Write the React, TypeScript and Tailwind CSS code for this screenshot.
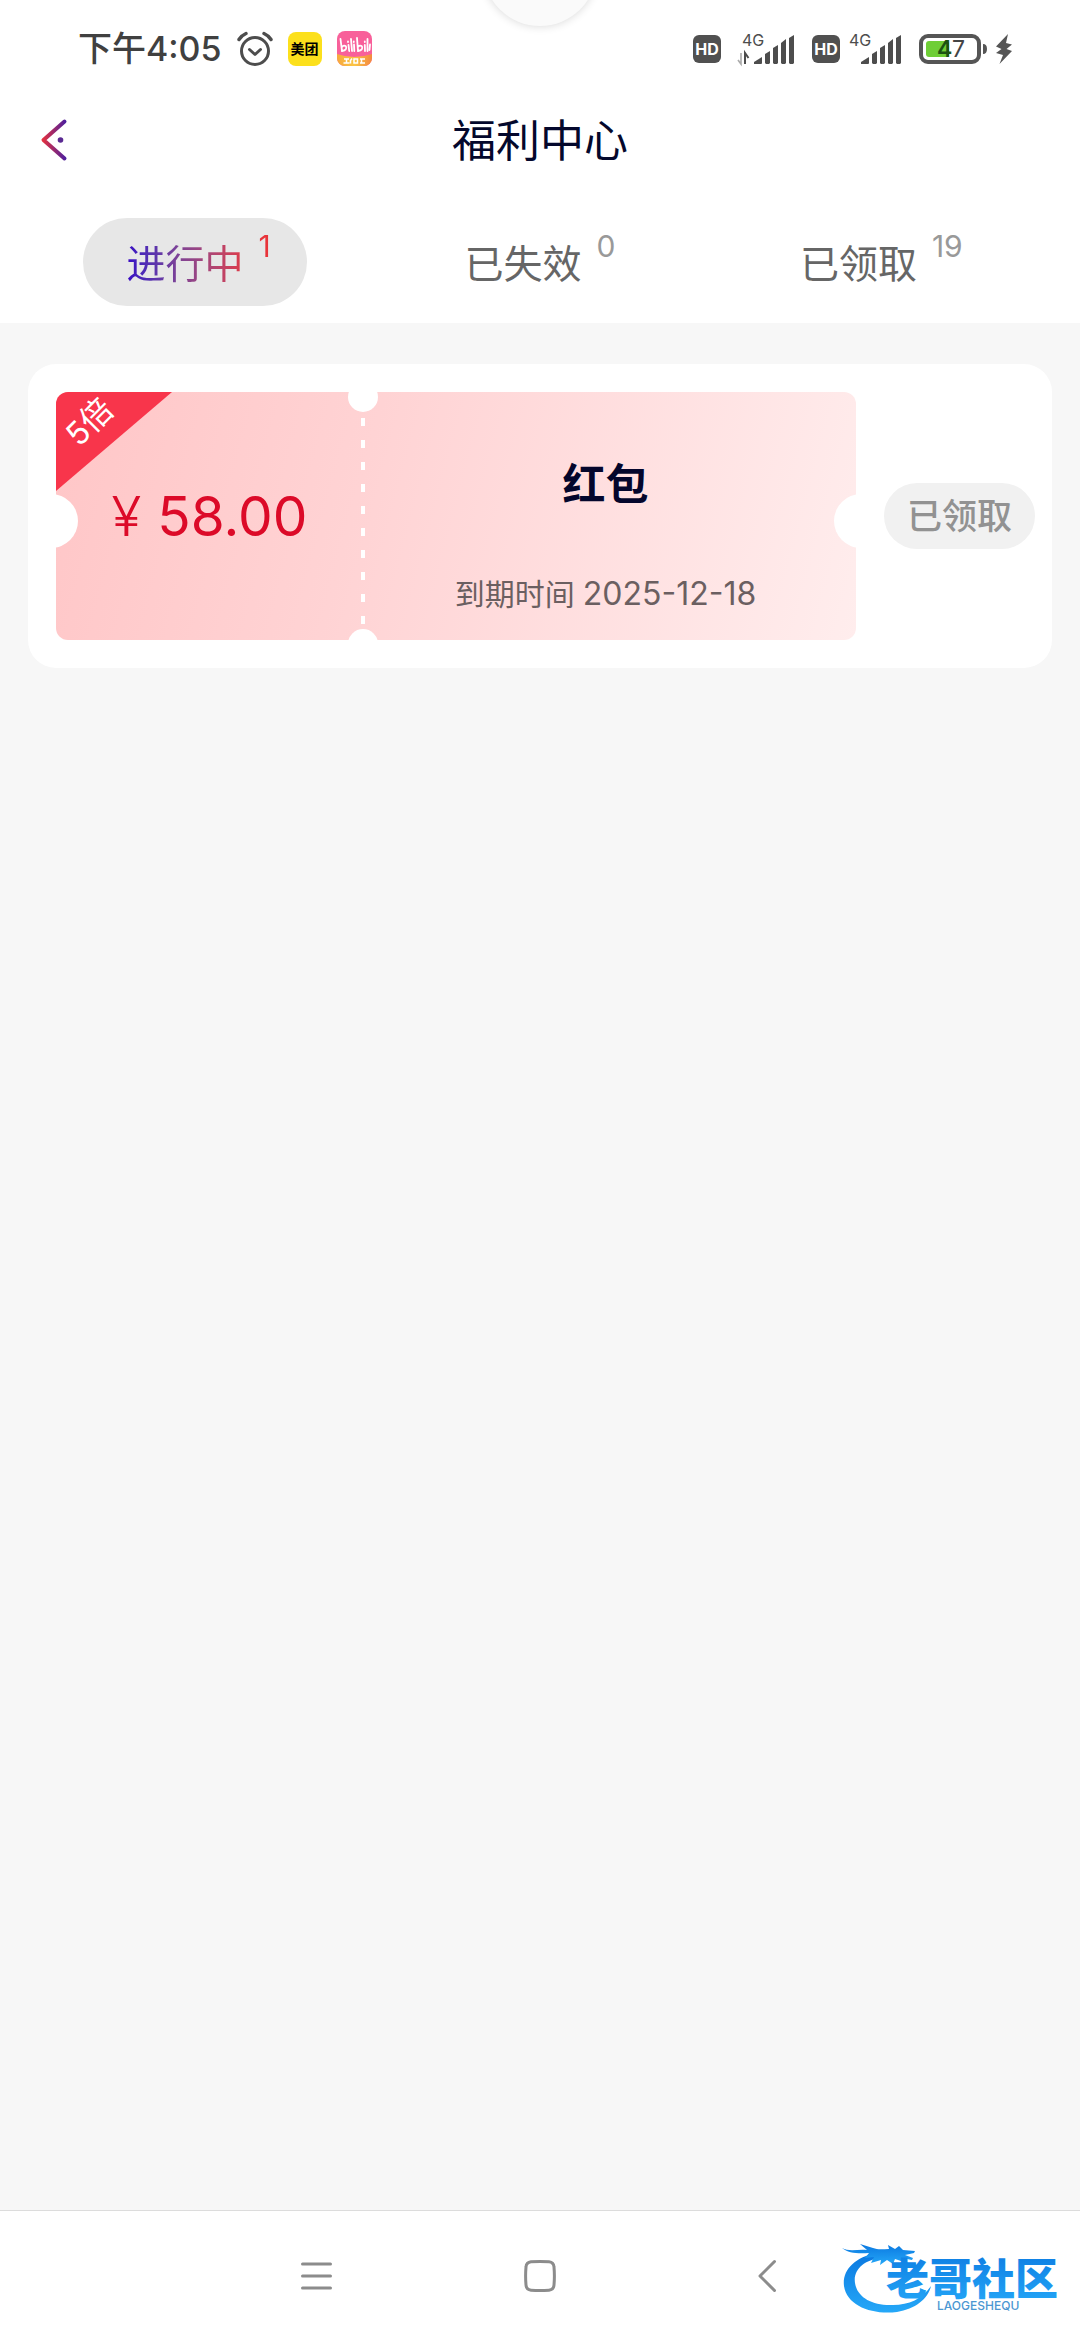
import React from "react";

type Tab = { label: string; count: number };

const tabs: Tab[] = [
  { label: "进行中", count: 1 },
  { label: "已失效", count: 0 },
  { label: "已领取", count: 19 },
];

function AlarmIcon() {
  return (
    <svg className="h-9 w-9" viewBox="0 0 36 36" fill="none" stroke="#4d4d4d" strokeWidth="3" strokeLinecap="round" strokeLinejoin="round">
      <circle cx="18" cy="20" r="13.5" />
      <path d="M12.5 18.5 L18 23.5 L23.5 18.5" />
      <path d="M2 8.5 Q4.5 4.5 9 2.5" strokeWidth="3.4" />
      <path d="M34 8.5 Q31.5 4.5 27 2.5" strokeWidth="3.4" />
    </svg>
  );
}

function BilibiliIcon() {
  return (
    <svg className="h-[35px] w-[35px]" viewBox="0 0 35 35">
      <defs>
        <clipPath id="bili-clip">
          <rect width="35" height="35" rx="8" />
        </clipPath>
        <linearGradient id="bili-band" x1="0" x2="1">
          <stop offset="0" stopColor="#f6a93c" />
          <stop offset="0.5" stopColor="#fbc544" />
          <stop offset="1" stopColor="#f4883f" />
        </linearGradient>
      </defs>
      <g clipPath="url(#bili-clip)">
        <rect width="35" height="35" fill="#f8609a" />
        <path d="M0 23 Q17 29 35 23 V35 H0Z" fill="url(#bili-band)" />
        <g fill="none" stroke="#fff" strokeWidth="1.8" strokeLinecap="round">
          <path d="M3.5 8 L5 20 Q10.5 19 9 15.5 Q7 13.5 5 16" />
          <path d="M11.5 14 L12.2 20 M11 10.5 v.5 M14 8 L15 20 M17 13.5 L17.3 20 M16.8 10.5 v.5" />
          <path d="M20 7 L21 20 Q26.5 19 25 15.5 Q23 13.5 21 16" />
          <path d="M27.8 14 L28 20 M27.8 10.5 v.5 M30.5 8 L30.5 20 M33 13.5 L32.5 19" />
        </g>
        <path d="M7 28 h5 M9.5 28 v4 M6.5 32 h6 M15 27.5 l-1.5 2 v3 M17 28 h3.5 v4 h-3.5z M23 28 h5 M23 32 h5 M24.5 28 v4" stroke="#fff" strokeWidth="1.5" fill="none" />
      </g>
    </svg>
  );
}

function HdBadge() {
  return (
    <span className="flex h-7 w-7 items-center justify-center rounded-md bg-[#505050] text-base font-bold text-white">
      HD
    </span>
  );
}

function Signal({ arrows }: { arrows?: boolean }) {
  return (
    <svg className="h-10 w-[59px]" viewBox="0 -4 59 40">
      <text x="5" y="13" fontSize="16" fill="#4d4d4d" className="font-['Inter']">4G</text>
      {arrows && (
        <g fill="none" strokeWidth="1.6">
          <path d="M4 20 V31 L1 27" stroke="#aaa" />
          <path d="M8 31 V20 L11.5 25" stroke="#4d4d4d" strokeWidth="2" />
        </g>
      )}
      <g fill="#4d4d4d">
        <path d="M17 31 v-2 l8 -5 v6 q0 1 -1 1z" />
        <path d="M28 21 l5 -3 v12 l-1 1 h-3 l-1 -1z" />
        <path d="M36 15 l5 -3 v18 l-1 1 h-3 l-1 -1z" />
        <path d="M44 10 l5 -4 v24 l-1 1 h-3 l-1 -1z" />
        <path d="M52 5 l5 -3 v28 l-1 1 h-3 l-1 -1z" />
      </g>
    </svg>
  );
}

function Battery() {
  return (
    <svg className="h-[30px] w-[94px]" viewBox="0 0 94 30">
      <rect x="2" y="2" width="58" height="26" rx="7" fill="#fff" stroke="#555" strokeWidth="4" />
      <rect x="7" y="7" width="23" height="16" rx="3" fill="#6fce36" />
      <text x="18" y="23" fontSize="23" fontWeight="600" fill="#1c5312" className="font-['Inter']">4</text>
      <text x="33" y="23" fontSize="23" fill="#444" className="font-['Inter']">7</text>
      <path d="M64 10 q4 0 4 5 q0 5 -4 5z" fill="#555" />
      <path d="M89 0 L77 12.5 L82.500 15 L77 19 L84 21 L80.5 30 L93 17 L87.5 15 L93 10.5 L87 9Z" fill="#555" />
    </svg>
  );
}

function StatusBar() {
  return (
    <div className="flex h-[97px] items-center justify-between pr-[67px] pl-[78px]">
      <div className="flex items-center gap-[15px]">
        <span className="text-[34px] leading-10 font-medium text-[#404040]">下午4:05</span>
        <AlarmIcon />
        <span className="flex h-[34px] w-[34px] items-center justify-center rounded-lg bg-[#fce01c] text-sm font-bold text-black">
          美团
        </span>
        <BilibiliIcon />
      </div>
      <div className="flex items-center gap-4">
        <HdBadge />
        <Signal arrows />
        <div className="flex items-center gap-1">
          <HdBadge />
          <Signal />
        </div>
        <Battery />
      </div>
    </div>
  );
}

function TitleBar() {
  return (
    <div className="grid h-[88px] grid-cols-[1fr_auto_1fr] items-center px-9">
      <button type="button" aria-label="返回" className="h-12 w-12">
        <svg className="h-12 w-9" viewBox="0 0 36 48" fill="none">
          <defs>
            <linearGradient id="back-gradient" gradientUnits="userSpaceOnUse" x1="6" y1="0" x2="30" y2="0">
              <stop offset="0" stopColor="#e8323c" />
              <stop offset="1" stopColor="#4a1fa0" />
            </linearGradient>
          </defs>
          <path d="M28.5 4.5 L7.5 23 L28.5 41.5" stroke="url(#back-gradient)" strokeWidth="4" strokeLinecap="round" strokeLinejoin="round" />
          <circle cx="24.5" cy="23" r="2.8" fill="#5a2a92" />
        </svg>
      </button>
      <h1 className="text-[44px] leading-none text-[#04082c]">福利中心</h1>
    </div>
  );
}

function Tabs() {
  return (
    <div role="tablist" className="grid grid-cols-3 justify-items-center pt-[33px] pr-8 pb-[17px] pl-6">
      {tabs.map((tab, i) => {
        const active = i === 0;
        return (
          <button
            key={tab.label}
            type="button"
            role="tab"
            aria-selected={active}
            className={
              active
                ? "h-[88px] rounded-full bg-[#e7e7e7] pr-9 pl-11"
                : "h-[88px] rounded-full pr-9 pl-11"
            }
          >
            <span
              className={
                active
                  ? "flex items-start gap-[15px] bg-linear-to-r from-[#3a05c4] to-[#e8343a] to-85% bg-clip-text text-transparent"
                  : "flex items-start gap-[15px] text-[#666]"
              }
            >
              <span className="pt-1 text-[39px] leading-[56px]">{tab.label}</span>
              <span className={active ? "text-3xl leading-7" : "text-3xl leading-7 text-[#999]"}>
                {tab.count}
              </span>
            </span>
          </button>
        );
      })}
    </div>
  );
}

function Coupon() {
  return (
    <article className="flex items-center gap-7 rounded-[28px] bg-white py-7 pr-[17px] pl-7">
      <div className="relative flex h-[248px] flex-1 overflow-hidden rounded-xl bg-[linear-gradient(105deg,#ffc6c7_0%,#ffd3d4_38%,#ffeded_100%)]">
        <div className="flex w-[307px] items-center justify-center text-[55px] text-[#dc0a28]">
          <span className="flex items-baseline gap-4">
            <span className="font-light">¥</span>
            <span>58.00</span>
          </span>
        </div>
        <div className="flex flex-1 flex-col items-center justify-between pt-16 pr-2 pb-6">
          <h2 className="text-[43px] leading-14 font-bold text-[#04062c]">红包</h2>
          <p className="flex items-baseline gap-2 text-[30px] leading-11 text-[#6b5f61]">
            <span>到期时间</span>
            <time dateTime="2025-12-18" className="text-[32px]">2025-12-18</time>
          </p>
        </div>

        <div className="absolute top-0 left-0 h-[99px] w-[116px] bg-[#f8354b] [clip-path:polygon(0_0,100%_0,0_100%)]" />
        <span className="absolute top-[10px] left-2 -rotate-45 text-[32px] leading-10 text-white">5倍</span>
        <div className="absolute top-[26px] left-[305px] h-[208px] w-[4px] bg-[repeating-linear-gradient(to_bottom,#fff_0_8px,transparent_8px_22px)]" />
        <div className="absolute -top-[10px] left-[292px] h-[30px] w-[30px] rounded-full bg-white" />
        <div className="absolute -bottom-[19px] left-[292px] h-[30px] w-[30px] rounded-full bg-white" />
        <div className="absolute top-[102px] -left-8 h-[54px] w-[54px] rounded-full bg-white" />
        <div className="absolute top-[102px] -right-8 h-[54px] w-[54px] rounded-full bg-white" />
      </div>
      <button type="button" disabled className="h-[66px] w-[151px] rounded-full bg-[#f1f1f1] text-[35px] leading-none font-medium text-[#929292]">
        已领取
      </button>
    </article>
  );
}

function CommunityLogo() {
  return (
    <svg className="h-20 w-[226px]" viewBox="0 0 226 80">
      <defs>
        <linearGradient id="logo-blue" x1="0" y1="0" x2="0" y2="1">
          <stop offset="0" stopColor="#0b78e0" />
          <stop offset="1" stopColor="#25a8f8" />
        </linearGradient>
      </defs>
      <g fill="url(#logo-blue)">
        <path d="M37 15 C14 19 2 33 4 48 C7 68 32 77 57 74 C75 71 88 61 91 48 C82 61 69 67 53 67 C32 68 17 59 15 45 C13 32 24 21 43 20Z" />
        <path d="M2 10 C9 14 18 11 27 12 L20 6 L33 10 C38 12 43 11 49 11 L48 7 L55 11 L59 8 L63 12 L75 13 L74 15 L65 17 L73 20 L72 22 L62 20 L64 24 L55 21 L53 26 L47 22 L40 27 L41 22 L31 25 L34 19 L25 20 L29 15 C18 16 8 15 2 10Z" />
      </g>
      <text x="46" y="57" fontSize="43" fontWeight="900" fill="url(#logo-blue)" className="font-['Noto_Sans_CJK_SC']">老哥社区</text>
      <text x="97" y="72" fontSize="12" fontWeight="500" fill="#4b97d2" className="font-['Inter']">LAOGESHEQU</text>
    </svg>
  );
}

function NavBar() {
  return (
    <nav className="relative flex h-[130px] items-center justify-center gap-32 border-t border-[#dcdcdc] bg-white">
      <button type="button" aria-label="菜单" className="flex h-24 w-24 items-center justify-center">
        <svg className="h-9 w-9" viewBox="0 0 36 36" stroke="#8c8c8c" strokeWidth="3" strokeLinecap="round">
          <path d="M4.5 6 H32.5 M4.5 18 H32.5 M4.5 30 H32.5" />
        </svg>
      </button>
      <button type="button" aria-label="主页" className="flex h-24 w-24 items-center justify-center">
        <svg className="h-9 w-9" viewBox="0 0 36 36" fill="none" stroke="#8c8c8c" strokeWidth="3">
          <path d="M9 3.8 Q18 3 27 3.8 Q31.7 4.3 32 9 Q32.8 18 32 27 Q31.7 31.7 27 32.2 Q18 33 9 32.2 Q4.3 31.7 4 27 Q3.2 18 4 9 Q4.3 4.3 9 3.8Z" />
        </svg>
      </button>
      <button type="button" aria-label="后退" className="flex h-24 w-24 items-center justify-center">
        <svg className="h-9 w-9" viewBox="0 0 36 36" fill="none" stroke="#8c8c8c" strokeWidth="3" strokeLinecap="round" strokeLinejoin="round">
          <path d="M28.5 3.5 L14 18 L28.5 32.5" />
        </svg>
      </button>
      <div className="absolute right-[14px] bottom-[22px]">
        <CommunityLogo />
      </div>
    </nav>
  );
}

export default function App() {
  return (
    <div className="relative flex min-h-screen flex-col overflow-hidden bg-[#f7f7f7] font-['Inter','Noto_Sans_CJK_SC',sans-serif]">
      <div className="absolute -top-[88px] left-1/2 h-[114px] w-[114px] -translate-x-1/2 rounded-full bg-[#fafafa] shadow-[0_0_10px_rgba(0,0,0,0.16)]" />
      <header className="bg-white">
        <StatusBar />
        <TitleBar />
        <Tabs />
      </header>
      <main className="flex-1 px-7 pt-[41px]">
        <Coupon />
      </main>
      <NavBar />
    </div>
  );
}
